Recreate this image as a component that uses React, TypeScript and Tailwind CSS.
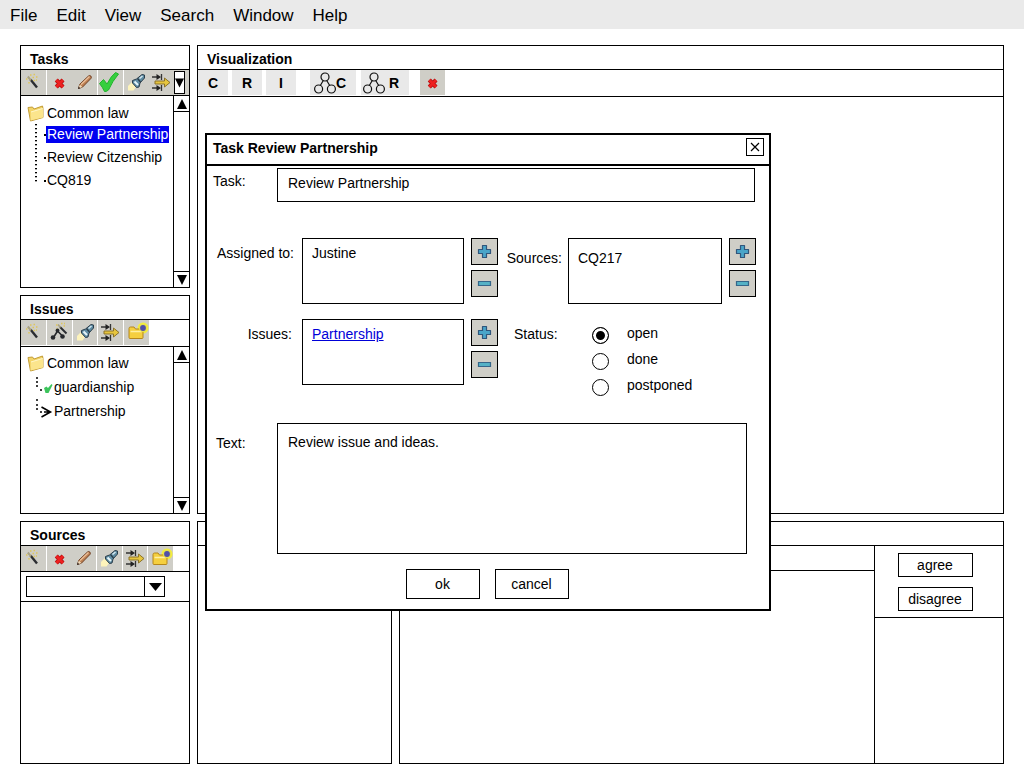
import { useState, type ReactNode } from "react";
import { clsx } from "clsx";

const MENU_ITEMS = ["File", "Edit", "View", "Search", "Window", "Help"];

const STATUS_OPTIONS = ["open", "done", "postponed"];

function Wand() {
  return (
    <>
      <path d="M9.5 9.500 16 17.500" stroke="#2b2d31" strokeWidth="2.400" />
      <path d="M6.800 6.500 10 10.300" stroke="#a9a283" strokeWidth="2" />
      <path
        d="M5 9h1.500M9 5h1.500M12.500 4.500h1.500M11.500 7.500h1.500M15 7h1.500M12.500 10.500h1.500M15 10h1M8 12v1.500"
        stroke="#e0c65c"
        strokeWidth="1.500"
      />
    </>
  );
}

function WandNet() {
  return (
    <>
      <path d="M13 7 19.500 13.500" stroke="#2b2d31" strokeWidth="2" />
      <path d="m11 4.500 2.500 3" stroke="#a9a283" strokeWidth="1.600" />
      <path
        d="M9 5h1.500M14 3.500h1.500M16.500 6h1.500M17 3.500h1M9.500 8.500h1"
        stroke="#e0c65c"
        strokeWidth="1.400"
      />
      <path d="M6.500 17.500 10.500 11l5 5" fill="none" stroke="#26282c" strokeWidth="1.600" />
      <circle cx="6" cy="17.500" r="2.300" fill="#26282c" />
      <circle cx="10.500" cy="10.500" r="1.900" fill="#26282c" />
      <circle cx="15.500" cy="16.500" r="2.300" fill="#26282c" />
    </>
  );
}

function RedCross() {
  return (
    <>
      <path d="m9.300 10 6.700 7M16 10l-6.700 7" stroke="#b01010" strokeWidth="4.200" />
      <path d="m9.300 10 6.700 7M16 10l-6.700 7" stroke="#ee2020" strokeWidth="2.600" />
    </>
  );
}

function Pencil() {
  return (
    <>
      <path
        d="m6.500 18.500 1.300-4.300L16.500 6q1.200-1 2.400.1 1 1.200 0 2.400l-8.400 8.600z"
        fill="#bd7f52"
        stroke="#6e4024"
        strokeWidth="1"
      />
      <path d="m9 14.500 8.500-8" stroke="#ecc09a" strokeWidth="1.200" />
      <path d="m6.500 18.500 1.300-4 2.600 2.600z" fill="#f0d9b8" />
      <path d="m6 19 .7-2.400 1.700 1.600z" fill="#332a26" />
    </>
  );
}

function BigCheck() {
  return (
    <path
      d="M1.500 13.500 5.500 9.500l3.500 4.500Q13 6 17.500 2.500L20.500 4Q14.500 11 10.500 20q-2.500 2-4 1.500Q4.500 17 1.500 13.500z"
      fill="#35cf3e"
      stroke="#22b42e"
      strokeWidth="1"
      strokeLinejoin="round"
    />
  );
}

function Flashlight() {
  return (
    <>
      <path d="m8.500 11.500 4.500 4-3.500 5H4V16z" fill="#fdf3bb" />
      <path
        d="m8.500 10.500 4-1.500 5.500-4.500 2.500.5v3L16 13l-1 4-2.500.5L8.500 13z"
        fill="#5f8da3"
        stroke="#2b3d4a"
        strokeWidth="1"
        strokeLinejoin="round"
      />
      <path d="m10.500 11.500 3.500 3.500" stroke="#e6f4f8" strokeWidth="2" />
      <path d="m15.500 8.500 3-2.500" stroke="#d5e9f1" strokeWidth="1.500" />
      <path d="m13.500 8.500 3 3.500" stroke="#2b3d4a" strokeWidth="1.300" />
    </>
  );
}

function Transfer() {
  return (
    <>
      <path
        d="M3 7h7M3 18h7M12.500 4v6M12.500 15v6"
        stroke="#333"
        strokeWidth="1.300"
      />
      <path d="m7.500 4 4.500 3-4.500 3zM7.500 15l4.500 3-4.500 3z" fill="#222" />
      <path
        d="M6 11h9.500V8l5.500 4.500-5.500 4.500V14H6z"
        fill="#e6c53e"
        stroke="#8b7329"
        strokeWidth="1"
      />
    </>
  );
}

function NewFolder() {
  return (
    <>
      <circle cx="19" cy="8" r="5.500" fill="#f3ee3c" />
      <path
        d="M5 8.500q0-1.500 1.500-1.500h3.500l1.500 2H18q1 0 1 1v7.500q0 1-1 1H6q-1 0-1-1z"
        fill="#f5cf3f"
        stroke="#b5871c"
        strokeWidth="1"
      />
      <path d="M6.500 11.500h11" stroke="#fff0a3" strokeWidth="1.500" />
      <circle cx="19" cy="8" r="4" fill="#e6df52" />
      <circle cx="19" cy="8" r="2.900" fill="#5050a8" />
    </>
  );
}

function Plus() {
  return (
    <path
      d="M10.500 6.500h4v4h4v4h-4v4h-4v-4h-4v-4h4z"
      fill="#4aa5c9"
      stroke="#30567c"
      strokeWidth="1.200"
      strokeLinejoin="round"
    />
  );
}

function Minus() {
  return (
    <path d="M6.500 10.500h12v4h-12z" fill="#55b2c6" stroke="#36668a" strokeWidth="1.200" />
  );
}

function Icon({ children }: { children: ReactNode }) {
  return (
    <svg viewBox="0 0 25 25" className="block size-[25px]" fill="none" aria-hidden="true">
      {children}
    </svg>
  );
}

type ToolProps = {
  label: string;
  divided?: boolean;
  children: ReactNode;
};

function Tool({ label, divided = true, children }: ToolProps) {
  return (
    <button
      type="button"
      aria-label={label}
      className={clsx(
        "h-[25px] min-w-0 flex-1 overflow-hidden bg-[#cfcec7]",
        divided && "border-r border-white",
      )}
    >
      <Icon>{children}</Icon>
    </button>
  );
}

type PanelProps = {
  title?: string;
  className?: string;
  children?: ReactNode;
};

function Panel({ title, className, children }: PanelProps) {
  return (
    <section className={clsx("flex min-w-0 flex-col border border-black", className)}>
      <h2 className="h-6 border-b border-black pl-[9px] pt-[3px] font-bold leading-5">{title}</h2>
      {children}
    </section>
  );
}

function Triangle({ down = false }: { down?: boolean }) {
  return (
    <svg viewBox="0 0 10 10" className="block size-[10px]" aria-hidden="true">
      <path d={down ? "M0 0h10L5 10z" : "M0 10h10L5 0z"} />
    </svg>
  );
}

function Scrollbar() {
  return (
    <div className="flex w-4 shrink-0 flex-col justify-between border-l border-black">
      <button
        type="button"
        aria-label="Scroll up"
        className="flex h-4 items-center justify-center border-b border-black"
      >
        <Triangle />
      </button>
      <button
        type="button"
        aria-label="Scroll down"
        className="flex h-4 items-center justify-center border-t border-black"
      >
        <Triangle down />
      </button>
    </div>
  );
}

function FolderRow({ children }: { children: ReactNode }) {
  return (
    <div className="flex h-5 items-center gap-[2px] pl-[6px]">
      <svg viewBox="0 0 18 18" className="size-[18px]" aria-hidden="true">
        <path
          d="M1 3.500 5.500 3l1.500 2 8.500-3 .5 2.500v9L3.500 17z"
          fill="#f3d468"
          stroke="#c39d36"
          strokeWidth="1"
          strokeLinejoin="round"
        />
        <path d="M3.500 16.500 4 7.500 16 4v9.500z" fill="#fbe58c" />
        <path d="M4 8 15.500 4.500" stroke="#fff6c8" strokeWidth="1" />
      </svg>
      {children}
    </div>
  );
}

function NetGlyph() {
  return (
    <svg
      viewBox="0 0 22 22"
      className="size-[22px]"
      fill="none"
      stroke="#111"
      strokeWidth="1.200"
      aria-hidden="true"
    >
      <circle cx="11" cy="5" r="4" />
      <circle cx="4.600" cy="17" r="4" />
      <circle cx="17.400" cy="17" r="4" />
      <path d="m9.300 8.500-3 5M12.700 8.500l3 5" />
    </svg>
  );
}

function TasksPanel() {
  return (
    <Panel title="Tasks">
      <div className="flex h-[26px] border-b border-black bg-[#cfcec7]">
        <div className="flex w-[153px]">
          <Tool label="New task"><Wand /></Tool>
          <Tool label="Delete task" divided={false}><RedCross /></Tool>
          <Tool label="Edit task"><Pencil /></Tool>
          <Tool label="Complete task"><BigCheck /></Tool>
          <Tool label="Find task" divided={false}><Flashlight /></Tool>
          <Tool label="Transfer task" divided={false}><Transfer /></Tool>
        </div>
        <button
          type="button"
          aria-label="More tools"
          className="my-px flex w-[11px] items-center justify-center border border-black bg-white"
        >
          <Triangle down />
        </button>
      </div>
      <div className="flex flex-1">
        <div className="flex-1 pt-[7px]">
          <FolderRow>Common law</FolderRow>
          <div className="flex">
            <div className="ml-[14px] mr-[7px] mt-px h-[58px] w-[2px] bg-[repeating-linear-gradient(#000_0_1px,#aaa_1px_2px,transparent_2px_4px)]" />
            <ul>
              {["Review Partnership", "Review Citzenship", "CQ819"].map((task, index) => (
                <li key={task} className="flex h-[23px] items-center">
                  <span className="h-[2px] w-[2px] bg-black" />
                  <button
                    type="button"
                    className={clsx(
                      "whitespace-nowrap px-px leading-[17px]",
                      index === 0 && "bg-[#0000f0] text-white",
                    )}
                  >
                    {task}
                  </button>
                </li>
              ))}
            </ul>
          </div>
        </div>
        <Scrollbar />
      </div>
    </Panel>
  );
}

function IssuesPanel() {
  return (
    <Panel title="Issues">
      <div className="h-[27px] border-b border-black">
        <div className="flex w-[128px]">
          <Tool label="New issue"><Wand /></Tool>
          <Tool label="New issue network"><WandNet /></Tool>
          <Tool label="Find issue"><Flashlight /></Tool>
          <Tool label="Transfer issue"><Transfer /></Tool>
          <Tool label="New issue folder" divided={false}><NewFolder /></Tool>
        </div>
      </div>
      <div className="flex flex-1">
        <div className="flex-1 pt-[6px]">
          <FolderRow>Common law</FolderRow>
          <ul className="pl-[14px] pt-[2px]">
            <li className="flex h-6 items-center gap-px">
              <svg viewBox="0 0 18 24" className="h-6 w-[18px]" aria-hidden="true">
                <path d="M1 3h2M1 7h2M1 11h2M5 15h2" stroke="#000" strokeWidth="1.600" />
                <path d="m9 13 2.500-1.500L13 13l3.500-4 1 1-4 8h-3z" fill="#3cc45c" />
              </svg>
              guardianship
            </li>
            <li className="flex h-6 items-center gap-px">
              <svg viewBox="0 0 18 24" className="h-6 w-[18px]" aria-hidden="true">
                <path d="M1 1h2M1 6h2M1 10h2M5 13h2" stroke="#000" strokeWidth="1.600" />
                <path
                  d="m6.500 8 9 5-9 5M9 13h6"
                  fill="none"
                  stroke="#000"
                  strokeWidth="1.600"
                />
              </svg>
              Partnership
            </li>
          </ul>
        </div>
        <Scrollbar />
      </div>
    </Panel>
  );
}

function SourcesPanel() {
  return (
    <Panel title="Sources">
      <div className="h-[26px] border-b border-black">
        <div className="flex w-[153px]">
          <Tool label="New source"><Wand /></Tool>
          <Tool label="Delete source" divided={false}><RedCross /></Tool>
          <Tool label="Edit source"><Pencil /></Tool>
          <Tool label="Find source"><Flashlight /></Tool>
          <Tool label="Transfer source"><Transfer /></Tool>
          <Tool label="New source folder"><NewFolder /></Tool>
        </div>
      </div>
      <div className="border-b border-black py-1 pl-[5px] pr-6">
        <div className="relative">
          <select
            aria-label="Source"
            className="block h-[21px] w-full appearance-none border border-black bg-white"
          >
            <option value="" />
          </select>
          <span className="pointer-events-none absolute inset-y-0 right-0 flex w-[21px] items-center justify-center border-l border-black">
            <svg viewBox="0 0 13 8" className="h-2 w-[13px]" aria-hidden="true">
              <path d="M0 0h13L6.500 8z" />
            </svg>
          </span>
        </div>
      </div>
    </Panel>
  );
}

function VisualizationPanel() {
  const letterClass = "h-[25px] w-[30px] bg-[#e9e9e9] font-bold";
  const netClass = "flex h-[25px] items-center bg-[#e9e9e9] font-bold";

  return (
    <Panel title="Visualization" className="row-span-2">
      <div className="flex h-[27px] border-b border-black">
        <div className="flex gap-1">
          <button type="button" className={letterClass}>C</button>
          <button type="button" className={letterClass}>R</button>
          <button type="button" className={letterClass}>I</button>
        </div>
        <div className="ml-[14px] flex gap-[5px]">
          <button type="button" className={clsx(netClass, "w-[46px] pl-1")}>
            <NetGlyph />C
          </button>
          <button type="button" className={clsx(netClass, "w-12 gap-1 pl-[2px]")}>
            <NetGlyph />R
          </button>
        </div>
        <div className="ml-[11px] flex w-[25px]">
          <Tool label="Delete" divided={false}><RedCross /></Tool>
        </div>
      </div>
    </Panel>
  );
}

function DecisionPanel() {
  const buttonClass = "h-6 w-[75px] border border-black";

  return (
    <Panel className="flex-1">
      <div className="flex flex-1">
        <div className="flex-1">
          <div className="h-[25px] border-b border-black" />
        </div>
        <div className="w-[129px] border-l border-black">
          <div className="flex flex-col items-center gap-[10px] border-b border-black pb-[6px] pr-2 pt-[7px]">
            <button type="button" className={buttonClass}>agree</button>
            <button type="button" className={buttonClass}>disagree</button>
          </div>
        </div>
      </div>
    </Panel>
  );
}

type EditableListProps = {
  id: string;
  label: string;
  labelClassName: string;
  listClassName: string;
  children: ReactNode;
};

function EditableList({ id, label, labelClassName, listClassName, children }: EditableListProps) {
  const buttonClass = "flex size-[27px] items-center justify-center border border-black bg-[#cfcec7]";

  return (
    <>
      <span id={id} className={clsx("shrink-0 text-right", labelClassName)}>
        {label}
      </span>
      <ul aria-labelledby={id} className={clsx("h-[66px] border border-black", listClassName)}>
        <li>{children}</li>
      </ul>
      <div className="ml-[7px] flex shrink-0 flex-col gap-[5px]">
        <button type="button" aria-label={`Add: ${label}`} className={buttonClass}>
          <Icon><Plus /></Icon>
        </button>
        <button type="button" aria-label={`Remove: ${label}`} className={buttonClass}>
          <Icon><Minus /></Icon>
        </button>
      </div>
    </>
  );
}

function TaskDialog({ onClose }: { onClose: () => void }) {
  const [task, setTask] = useState("Review Partnership");
  const [text, setText] = useState("Review issue and ideas.");
  const [status, setStatus] = useState("open");

  return (
    <div
      role="dialog"
      aria-labelledby="task-dialog-title"
      className="absolute left-[205px] top-[133px] w-[566px] border-2 border-black bg-white leading-5"
    >
      <div className="flex h-[31px] items-start justify-between border-b-2 border-black pl-[6px] pr-[5px] pt-[3px]">
        <h2 id="task-dialog-title" className="font-bold">Task Review Partnership</h2>
        <button
          type="button"
          aria-label="Close"
          onClick={onClose}
          className="flex size-[18px] items-center justify-center border border-black"
        >
          <svg viewBox="0 0 10 10" className="size-[10px]" stroke="#000" strokeWidth="1.200" aria-hidden="true">
            <path d="m1 1 8 8M9 1 1 9" />
          </svg>
        </button>
      </div>

      <form className="pb-[10px] pt-[2px]" onSubmit={(event) => event.preventDefault()}>
        <div className="flex pr-[14px]">
          <label htmlFor="task-name" className="w-[70px] pl-[6px] pt-[3px]">Task:</label>
          <input
            id="task-name"
            type="text"
            value={task}
            onChange={(event) => setTask(event.target.value)}
            className="h-[34px] min-w-0 flex-1 border border-black pb-1 pl-[10px]"
          />
        </div>

        <div className="mt-9 flex pr-[13px]">
          <EditableList
            id="assigned-to"
            label="Assigned to:"
            labelClassName="w-[87px] pt-[5px]"
            listClassName="ml-2 w-[162px] pl-[9px] pt-1"
          >
            Justine
          </EditableList>
          <EditableList
            id="sources"
            label="Sources:"
            labelClassName="w-16 pt-[10px]"
            listClassName="ml-[6px] flex-1 pl-[9px] pt-[9px]"
          >
            CQ217
          </EditableList>
        </div>

        <div className="mt-[15px] flex">
          <EditableList
            id="issues"
            label="Issues:"
            labelClassName="w-[85px] pt-[5px]"
            listClassName="ml-[10px] w-[162px] pl-[9px] pt-1"
          >
            <a href="#partnership" className="text-[#0000d8] underline">Partnership</a>
          </EditableList>
          <fieldset className="flex pl-4">
            <legend className="float-left w-[78px] pt-[5px]">Status:</legend>
            <div className="flex flex-col pt-1">
              {STATUS_OPTIONS.map((option) => (
                <label key={option} className="flex h-[26px] gap-[18px]">
                  <input
                    type="radio"
                    name="status"
                    value={option}
                    checked={status === option}
                    onChange={() => setStatus(option)}
                    className="mt-1 size-[17px] appearance-none rounded-full border border-black bg-white checked:bg-black checked:shadow-[inset_0_0_0_3px_white]"
                  />
                  {option}
                </label>
              ))}
            </div>
          </fieldset>
        </div>

        <div className="mt-[22px] flex pr-[22px]">
          <label htmlFor="task-text" className="w-[70px] pl-[9px] pt-[10px]">Text:</label>
          <textarea
            id="task-text"
            value={text}
            onChange={(event) => setText(event.target.value)}
            className="block h-[131px] min-w-0 flex-1 resize-none border border-black pl-[10px] pt-2"
          />
        </div>

        <div className="mt-[15px] flex justify-center gap-[15px] pr-[2px]">
          <button type="submit" className="h-[30px] w-[74px] border border-black">ok</button>
          <button type="button" onClick={onClose} className="h-[30px] w-[74px] border border-black">
            cancel
          </button>
        </div>
      </form>
    </div>
  );
}

export default function App() {
  const [dialogOpen, setDialogOpen] = useState(true);

  return (
    <div className="relative flex min-h-screen flex-col bg-white font-['Liberation_Sans',Arial,sans-serif] text-sm text-black">
      <nav className="flex h-[29px] items-center gap-[19px] bg-[#eaeaea] px-[10px] pt-[3px] text-[17px]">
        {MENU_ITEMS.map((item) => (
          <button key={item} type="button">{item}</button>
        ))}
      </nav>

      <main className="grid flex-1 grid-cols-[170px_minmax(0,1fr)] grid-rows-[243fr_219fr_243fr] gap-[7px] px-5 pb-1 pt-4">
        <TasksPanel />
        <VisualizationPanel />
        <IssuesPanel />
        <SourcesPanel />
        <div className="flex gap-[7px]">
          <Panel className="w-[195px]" />
          <DecisionPanel />
        </div>
      </main>

      {dialogOpen && <TaskDialog onClose={() => setDialogOpen(false)} />}
    </div>
  );
}
